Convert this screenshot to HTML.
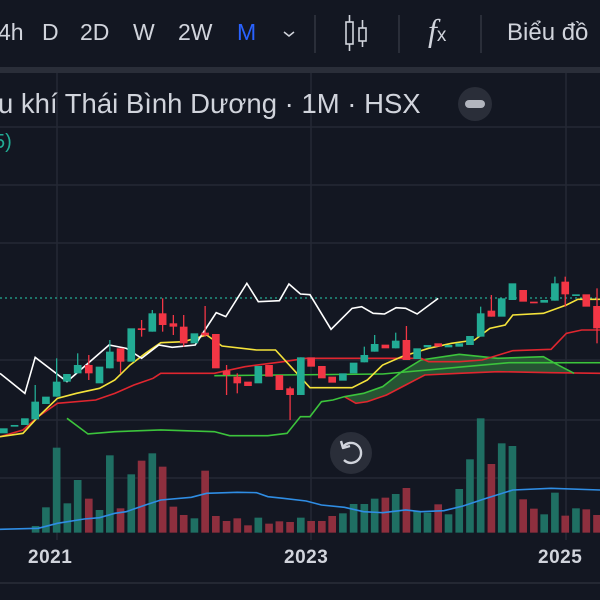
<!DOCTYPE html>
<html><head><meta charset="utf-8"><style>
html,body{margin:0;padding:0;background:#131722;width:600px;height:600px;overflow:hidden;font-family:"Liberation Sans",sans-serif}
.t{position:absolute;top:19px;font-size:23px;color:#d1d4dc}
.sep{position:absolute;top:15px;width:2px;height:38px;background:#2a2e39}
</style></head><body>
<svg width="600" height="600" style="position:absolute;left:0;top:0">
<rect width="600" height="600" fill="#131722"/>
<rect y="67" width="600" height="6" fill="#2a2e39"/>
<g stroke="#242834" stroke-width="1.5">
<line x1="57" y1="73" x2="57" y2="540"/><line x1="311" y1="73" x2="311" y2="540"/><line x1="566" y1="73" x2="566" y2="540"/>
<line x1="0" y1="127" x2="600" y2="127"/><line x1="0" y1="185" x2="600" y2="185"/><line x1="0" y1="243" x2="600" y2="243"/>
<line x1="0" y1="360" x2="600" y2="360"/><line x1="0" y1="420" x2="600" y2="420"/><line x1="0" y1="478" x2="600" y2="478"/>
</g>
<line x1="0" y1="583" x2="600" y2="583" stroke="#2a2e39" stroke-width="1.5"/>
<line x1="0" y1="298" x2="600" y2="298" stroke="#22ab94" stroke-width="1.3" stroke-dasharray="2 3"/>
<g transform="translate(0,420) scale(0.3827,0.3333)">
<g fill="#1f6f63">
<rect x="83" y="318" width="20" height="20"/><rect x="110" y="262" width="20" height="76"/><rect x="138" y="83" width="20" height="255"/><rect x="166" y="250" width="20" height="88"/><rect x="193" y="180" width="20" height="158"/><rect x="250" y="270" width="20" height="68"/><rect x="277" y="106" width="20" height="232"/><rect x="333" y="163" width="20" height="175"/><rect x="388" y="100" width="20" height="238"/><rect x="498" y="295" width="20" height="43"/><rect x="665" y="293" width="20" height="45"/><rect x="776" y="293" width="20" height="45"/><rect x="886" y="280" width="20" height="58"/><rect x="914" y="252" width="20" height="86"/><rect x="942" y="252" width="20" height="86"/><rect x="969" y="236" width="20" height="102"/><rect x="1024" y="222" width="20" height="116"/><rect x="1080" y="273" width="20" height="65"/><rect x="1107" y="278" width="20" height="60"/><rect x="1162" y="283" width="20" height="55"/><rect x="1190" y="207" width="20" height="131"/><rect x="1218" y="118" width="20" height="220"/><rect x="1246" y="-5" width="20" height="343"/><rect x="1301" y="70" width="20" height="268"/><rect x="1329" y="78" width="20" height="260"/><rect x="1412" y="283" width="20" height="55"/><rect x="1440" y="218" width="20" height="120"/><rect x="1495" y="265" width="20" height="73"/>
</g>
<g fill="#8e2f3e">
<rect x="222" y="236" width="20" height="102"/><rect x="305" y="265" width="20" height="73"/><rect x="360" y="122" width="20" height="216"/><rect x="415" y="140" width="20" height="198"/><rect x="443" y="260" width="20" height="78"/><rect x="470" y="285" width="20" height="53"/><rect x="526" y="152" width="20" height="186"/><rect x="554" y="288" width="20" height="50"/><rect x="582" y="303" width="20" height="35"/><rect x="610" y="295" width="20" height="43"/><rect x="638" y="316" width="20" height="22"/><rect x="693" y="311" width="20" height="27"/><rect x="720" y="304" width="20" height="34"/><rect x="748" y="306" width="20" height="32"/><rect x="803" y="303" width="20" height="35"/><rect x="831" y="303" width="20" height="35"/><rect x="858" y="288" width="20" height="50"/><rect x="997" y="233" width="20" height="105"/><rect x="1052" y="204" width="20" height="134"/><rect x="1135" y="253" width="20" height="85"/><rect x="1274" y="132" width="20" height="206"/><rect x="1357" y="238" width="20" height="100"/><rect x="1385" y="266" width="20" height="72"/><rect x="1467" y="287" width="20" height="51"/><rect x="1522" y="268" width="20" height="70"/><rect x="1550" y="285" width="20" height="53"/>
</g>
<polyline fill="none" stroke="#2f8de4" stroke-width="1.6" vector-effect="non-scaling-stroke" points="0,328 100,325 150,310 220,297 260,293 300,280 330,275 380,255 420,240 500,232 540,220 620,217 670,218 700,230 740,235 800,243 840,255 900,262 950,275 1000,278 1060,270 1100,275 1160,272 1210,258 1270,235 1340,210 1440,205 1568,210"/>
</g>
<g transform="translate(0,260) scale(0.3827,0.3333)">
<polygon fill="#2e6a3a" fill-opacity="0.75" points="900,410 950,400 1000,380 1050,335 1100,300 1200,283 1260,290 1300,295 1420,290 1450,310 1500,340 1568,340 1568,340 1440,338 1300,335 1200,340 1110,345 1060,375 1010,405 960,425 930,430"/>
<g fill="none" stroke-width="1.6">
<polyline stroke="#e0262f" vector-effect="non-scaling-stroke" points="900,410 930,430 960,425 1010,405 1060,375 1110,345 1200,340 1300,335 1440,338 1568,340"/>
<polyline stroke="#3cc43c" vector-effect="non-scaling-stroke" points="175,475 230,522 300,515 420,510 560,515 600,527 700,527 750,520 785,470 810,470 840,425 870,420 900,410 950,400 1000,380 1050,335 1100,300 1200,283 1260,290 1300,295 1420,290 1450,310 1500,340"/>
<polyline stroke="#3cc43c" vector-effect="non-scaling-stroke" points="560,347 1000,342 1330,308 1568,308"/>
<polyline stroke="#e0262f" vector-effect="non-scaling-stroke" points="0,530 60,510 100,470 150,430 250,420 300,400 350,375 400,355 420,340 560,340 640,320 740,305 800,295 1100,295 1120,305 1200,305 1260,300 1340,272 1440,268 1480,220 1520,210 1568,210"/>
<polyline stroke="#f5e33b" vector-effect="non-scaling-stroke" points="0,530 60,520 100,470 150,415 200,400 260,385 300,360 340,315 380,280 420,248 480,245 540,225 580,258 670,270 720,270 760,320 810,383 920,383 960,360 1000,315 1050,290 1120,265 1180,250 1240,240 1280,205 1320,195 1340,165 1420,160 1480,135 1510,118 1568,118"/>
<polyline stroke="#ffffff" vector-effect="non-scaling-stroke" points="0,340 65,400 92,292 175,365 285,255 330,265 370,295 415,255 450,262 510,255 565,158 590,170 645,70 675,125 730,122 755,72 785,102 810,104 865,208 920,145 945,140 975,160 1005,162 1035,143 1060,145 1090,162 1145,115"/>
</g>
<g stroke="#22ab94" stroke-width="1.3">
<line x1="92" y1="375" x2="92" y2="478" vector-effect="non-scaling-stroke"/><line x1="148" y1="295" x2="148" y2="410" vector-effect="non-scaling-stroke"/><line x1="203" y1="280" x2="203" y2="340" vector-effect="non-scaling-stroke"/><line x1="287" y1="240" x2="287" y2="325" vector-effect="non-scaling-stroke"/><line x1="398" y1="150" x2="398" y2="215" vector-effect="non-scaling-stroke"/><line x1="786" y1="292" x2="786" y2="405" vector-effect="non-scaling-stroke"/><line x1="952" y1="260" x2="952" y2="307" vector-effect="non-scaling-stroke"/><line x1="979" y1="225" x2="979" y2="275" vector-effect="non-scaling-stroke"/><line x1="1034" y1="218" x2="1034" y2="265" vector-effect="non-scaling-stroke"/><line x1="1256" y1="140" x2="1256" y2="230" vector-effect="non-scaling-stroke"/><line x1="1450" y1="50" x2="1450" y2="122" vector-effect="non-scaling-stroke"/>
</g>
<g stroke="#f23645" stroke-width="1.3">
<line x1="232" y1="285" x2="232" y2="360" vector-effect="non-scaling-stroke"/><line x1="315" y1="265" x2="315" y2="340" vector-effect="non-scaling-stroke"/><line x1="370" y1="180" x2="370" y2="230" vector-effect="non-scaling-stroke"/><line x1="425" y1="115" x2="425" y2="215" vector-effect="non-scaling-stroke"/><line x1="453" y1="165" x2="453" y2="225" vector-effect="non-scaling-stroke"/><line x1="480" y1="165" x2="480" y2="260" vector-effect="non-scaling-stroke"/><line x1="536" y1="138" x2="536" y2="230" vector-effect="non-scaling-stroke"/><line x1="592" y1="315" x2="592" y2="405" vector-effect="non-scaling-stroke"/><line x1="620" y1="340" x2="620" y2="400" vector-effect="non-scaling-stroke"/><line x1="758" y1="380" x2="758" y2="480" vector-effect="non-scaling-stroke"/><line x1="1062" y1="198" x2="1062" y2="300" vector-effect="non-scaling-stroke"/><line x1="1284" y1="105" x2="1284" y2="170" vector-effect="non-scaling-stroke"/><line x1="1477" y1="50" x2="1477" y2="140" vector-effect="non-scaling-stroke"/><line x1="1560" y1="85" x2="1560" y2="250" vector-effect="non-scaling-stroke"/>
</g>
<g fill="#22ab94">
<rect x="0" y="505" width="20" height="15"/><rect x="28" y="495" width="20" height="5"/><rect x="55" y="475" width="20" height="20"/><rect x="82" y="425" width="20" height="53"/><rect x="110" y="410" width="20" height="22"/><rect x="138" y="365" width="20" height="45"/><rect x="165" y="342" width="20" height="23"/><rect x="193" y="315" width="20" height="25"/><rect x="250" y="320" width="20" height="50"/><rect x="277" y="275" width="20" height="50"/><rect x="333" y="205" width="20" height="100"/><rect x="388" y="160" width="20" height="55"/><rect x="498" y="220" width="20" height="30"/><rect x="665" y="318" width="20" height="52"/><rect x="776" y="292" width="20" height="113"/><rect x="886" y="340" width="20" height="22"/><rect x="914" y="308" width="20" height="32"/><rect x="942" y="285" width="20" height="22"/><rect x="969" y="252" width="20" height="23"/><rect x="1024" y="242" width="20" height="23"/><rect x="1080" y="265" width="20" height="32"/><rect x="1107" y="255" width="20" height="7"/><rect x="1162" y="255" width="20" height="7"/><rect x="1190" y="250" width="20" height="10"/><rect x="1218" y="228" width="20" height="27"/><rect x="1246" y="160" width="20" height="70"/><rect x="1301" y="115" width="20" height="55"/><rect x="1329" y="70" width="20" height="50"/><rect x="1412" y="120" width="20" height="8"/><rect x="1440" y="70" width="20" height="52"/><rect x="1495" y="103" width="20" height="5"/>
</g>
<g fill="#f23645">
<rect x="222" y="315" width="20" height="25"/><rect x="305" y="265" width="20" height="40"/><rect x="360" y="205" width="20" height="5"/><rect x="415" y="160" width="20" height="35"/><rect x="443" y="190" width="20" height="10"/><rect x="470" y="200" width="20" height="50"/><rect x="526" y="218" width="20" height="8"/><rect x="554" y="222" width="20" height="103"/><rect x="582" y="332" width="20" height="13"/><rect x="610" y="350" width="20" height="20"/><rect x="638" y="365" width="20" height="13"/><rect x="693" y="315" width="20" height="35"/><rect x="720" y="345" width="20" height="45"/><rect x="748" y="385" width="20" height="20"/><rect x="803" y="292" width="20" height="28"/><rect x="831" y="318" width="20" height="37"/><rect x="858" y="350" width="20" height="18"/><rect x="997" y="254" width="20" height="11"/><rect x="1052" y="240" width="20" height="60"/><rect x="1135" y="250" width="20" height="10"/><rect x="1274" y="152" width="20" height="18"/><rect x="1357" y="90" width="20" height="35"/><rect x="1385" y="125" width="20" height="5"/><rect x="1467" y="65" width="20" height="38"/><rect x="1522" y="103" width="20" height="37"/><rect x="1550" y="138" width="20" height="67"/>
</g>
</g>
<circle cx="351" cy="453" r="21" fill="#2a2e39"/>
<path d="M343 447 A10 10 0 1 1 344 460" fill="none" stroke="#d1d4dc" stroke-width="2.4"/>
<path d="M341 441 L343 448 L350 446" fill="none" stroke="#d1d4dc" stroke-width="2.4" stroke-linejoin="round"/>
<circle cx="475" cy="104" r="17" fill="#2a2e39"/>
<rect x="465" y="100" width="20" height="8" rx="4" fill="#b2b5be"/>
<g stroke="#d1d4dc" stroke-width="1.6" fill="none">
<rect x="346" y="22" width="7" height="22"/><line x1="349.5" y1="15" x2="349.5" y2="22"/><line x1="349.5" y1="44" x2="349.5" y2="51"/>
<rect x="359" y="28" width="7" height="13"/><line x1="362.5" y1="20" x2="362.5" y2="28"/><line x1="362.5" y1="41" x2="362.5" y2="47"/>
<path d="M284 32 L289 36 L294 32" stroke-width="1.5"/>
</g>
</svg>
<div class="t" style="left:-2px">4h</div>
<div class="t" style="left:42px">D</div>
<div class="t" style="left:80px">2D</div>
<div class="t" style="left:133px">W</div>
<div class="t" style="left:178px">2W</div>
<div class="t" style="left:237px;color:#2962ff">M</div>
<div class="sep" style="left:314px"></div>
<div class="sep" style="left:398px"></div>
<div class="sep" style="left:480px"></div>
<div class="t" style="left:428px;top:12px;font-family:'Liberation Serif',serif;font-style:italic;font-size:32px">f<span style="font-size:19px;font-style:normal;font-family:'Liberation Sans',sans-serif">x</span></div>
<div class="t" style="left:507px;font-size:24px">Biểu đồ</div>
<div style="position:absolute;left:-2px;top:88px;font-size:27.5px;color:#d1d4dc;white-space:nowrap">u khí Thái Bình Dương · 1M · HSX</div>
<div style="position:absolute;left:-6px;top:131px;font-size:20px;color:#22ab94">5)</div>
<div style="position:absolute;left:28px;top:547px;font-size:19px;font-weight:bold;color:#d1d4dc;letter-spacing:0.5px">2021</div>
<div style="position:absolute;left:284px;top:547px;font-size:19px;font-weight:bold;color:#d1d4dc;letter-spacing:0.5px">2023</div>
<div style="position:absolute;left:538px;top:547px;font-size:19px;font-weight:bold;color:#d1d4dc;letter-spacing:0.5px">2025</div>
</body></html>
